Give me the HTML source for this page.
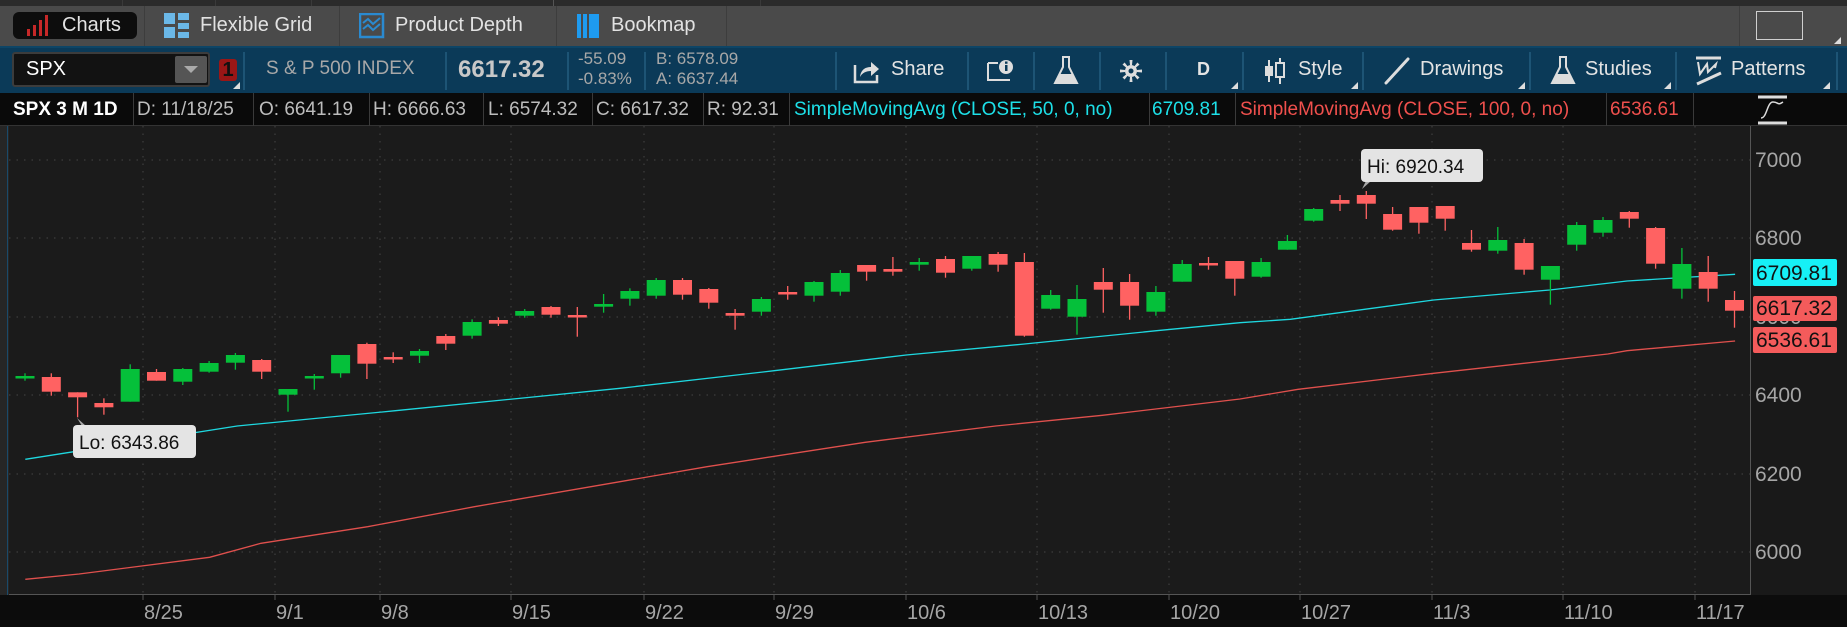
<!DOCTYPE html>
<html><head><meta charset="utf-8">
<style>
*{margin:0;padding:0;box-sizing:border-box}
body{width:1847px;height:627px;overflow:hidden;background:#1b1b1b;font-family:"Liberation Sans",sans-serif;position:relative}
.a{position:absolute;white-space:nowrap}
#tabs{position:absolute;left:0;top:0;width:1847px;height:46px;background:#4a4a4a}
#strip{position:absolute;left:0;top:0;width:1847px;height:6px;background:#2b2b2b}
.tab{color:#e2e2e2;font-size:20px;top:14px}
.vs{position:absolute;width:1px;background:#3a3a3a}
#tb{position:absolute;left:0;top:46px;width:1847px;height:47px;background:#0b3a58;border-top:2px solid #0e4566}
.tsep{position:absolute;top:4px;width:2px;height:38px;background:#1d5475}
.tt{color:#e4e4e4;font-size:20px;top:10px}
.corner{position:absolute;width:0;height:0;border-left:7px solid transparent;border-bottom:7px solid #ddd}
#info{position:absolute;left:0;top:93px;width:1847px;height:33px;background:#0a0a0a;border-bottom:1px solid #333}
.it{font-size:19px;color:#bdbdbd;top:6px}
.isep{position:absolute;top:0;width:1px;height:33px;background:#3a3a3a}
</style></head><body>
<div id="tabs">
 <div id="strip"></div>
 <div class="vs" style="left:122px;top:0;height:6px"></div><div class="vs" style="left:215px;top:0;height:6px"></div><div class="vs" style="left:311px;top:0;height:6px"></div><div class="vs" style="left:553px;top:0;height:6px;background:#555"></div><div class="vs" style="left:760px;top:0;height:6px"></div>
 <div class="a" style="left:13px;top:12px;width:124px;height:27px;background:#0d0d0d;border-radius:6px"></div>
 <svg class="a" style="left:26px;top:14px" width="26" height="24"><rect x="1" y="15" width="3" height="7" fill="#c62828"/><rect x="7" y="11" width="3" height="11" fill="#c62828"/><rect x="13" y="6" width="3" height="16" fill="#c62828"/><rect x="19" y="1" width="3" height="21" fill="#c62828"/></svg>
 <div class="a tab" style="left:62px">Charts</div>
 <div class="vs" style="left:144px;top:6px;height:40px;background:#3d3d3d"></div>
 <svg class="a" style="left:164px;top:13px" width="26" height="26"><rect x="0" y="0" width="11" height="11" fill="#6bb8e8"/><rect x="14" y="0" width="11" height="7" fill="#6bb8e8"/><rect x="14" y="10" width="11" height="6" fill="#6bb8e8"/><rect x="0" y="14" width="11" height="11" fill="#6bb8e8"/><rect x="14" y="19" width="11" height="6" fill="#6bb8e8"/></svg>
 <div class="a tab" style="left:200px">Flexible Grid</div>
 <div class="vs" style="left:339px;top:6px;height:40px;background:#3d3d3d"></div>
 <svg class="a" style="left:359px;top:13px" width="26" height="26"><rect x="1" y="1" width="23" height="23" fill="none" stroke="#2a8ad0" stroke-width="2.5"/><path d="M4 10 L9 6 L14 11 L21 5 M4 16 L9 12 L14 17 L21 11" stroke="#2a8ad0" stroke-width="2" fill="none"/></svg>
 <div class="a tab" style="left:395px">Product Depth</div>
 <div class="vs" style="left:556px;top:6px;height:40px;background:#3d3d3d"></div>
 <svg class="a" style="left:577px;top:13px" width="24" height="26"><rect x="0" y="1" width="4" height="24" fill="#1e9bf0"/><rect x="6" y="1" width="4" height="24" fill="#1e9bf0"/><rect x="12" y="1" width="10" height="24" fill="#1e9bf0"/></svg>
 <div class="a tab" style="left:611px">Bookmap</div>
 <div class="vs" style="left:726px;top:6px;height:40px;background:#3d3d3d"></div>
 <div class="vs" style="left:1739px;top:6px;height:40px;background:#3d3d3d"></div>
 <div class="a" style="left:1756px;top:11px;width:47px;height:29px;border:1px solid #cfcfcf"></div>
 <div class="corner" style="left:1834px;top:37px"></div>
</div>
<div id="tb">
 <div class="a" style="left:12px;top:4px;width:198px;height:35px;background:#121212;border:2px solid #3c3c3c;border-radius:3px"></div>
 <div class="a" style="left:26px;top:10px;color:#fff;font-size:20px">SPX</div>
 <div class="a" style="left:175px;top:8px;width:32px;height:27px;background:#555;border-radius:2px"></div>
 <div class="a" style="left:184px;top:18px;width:0;height:0;border-left:7px solid transparent;border-right:7px solid transparent;border-top:7px solid #aaa"></div>
 <div class="a" style="left:219px;top:11px;width:18px;height:22px;background:#9a1616;border-radius:3px;color:#111;font-size:20px;font-weight:bold;text-align:center;line-height:22px">1</div>
 <div class="corner" style="left:233px;top:34px"></div>
 <div class="tsep" style="left:243px"></div>
 <div class="a" style="left:266px;top:10px;color:#a8a8a8;font-size:19px">S &amp; P 500 INDEX</div>
 <div class="tsep" style="left:445px"></div>
 <div class="a" style="left:458px;top:8px;color:#c8c8c8;font-size:24px;font-weight:bold">6617.32</div>
 <div class="tsep" style="left:567px"></div>
 <div class="a" style="left:578px;top:1px;color:#a8a8a8;font-size:17px;line-height:20px">-55.09<br>-0.83%</div>
 <div class="tsep" style="left:644px"></div>
 <div class="a" style="left:656px;top:1px;color:#a8a8a8;font-size:17px;line-height:20px">B: 6578.09<br>A: 6637.44</div>
 <div class="tsep" style="left:835px"></div>
 <svg class="a" style="left:852px;top:9px" width="30" height="28"><path d="M3 8 V25 H25 V18" stroke="#ddd" stroke-width="2.5" fill="none"/><path d="M8 20 C9 12 14 10 19 10 V5 L27 12 L19 19 V14 C14 14 10 16 8 20Z" fill="#ddd"/></svg>
 <div class="a tt" style="left:891px">Share</div>
 <div class="tsep" style="left:967px"></div>
 <svg class="a" style="left:986px;top:10px" width="30" height="26"><path d="M2 5 V22 H24" stroke="#ddd" stroke-width="2" fill="none"/><path d="M2 5 H12" stroke="#ddd" stroke-width="2"/><circle cx="20" cy="9" r="7" fill="#ddd"/><rect x="19" y="7" width="2.5" height="6" fill="#0b3a58"/><rect x="19" y="3.5" width="2.5" height="2.3" fill="#0b3a58"/></svg>
 <div class="tsep" style="left:1033px"></div>
 <svg class="a" style="left:1053px;top:7px" width="26" height="32"><path d="M9 2 H17 M10 2 V12 L2 28 H24 L16 12 V2" stroke="#ddd" stroke-width="2" fill="none"/><path d="M6 19 H20 L24 28 H2Z" fill="#ddd"/></svg>
 <div class="tsep" style="left:1099px"></div>
 <svg class="a" style="left:1119px;top:11px" width="24" height="24"><g fill="#ddd"><circle cx="12" cy="12" r="6"/><path d="M10.5 1 H13.5 L13 6 H11Z M10.5 23 H13.5 L13 18 H11Z M1 10.5 V13.5 L6 13 V11Z M23 10.5 V13.5 L18 13 V11Z" /><path d="M3.5 5.6 L5.6 3.5 L8.6 7.2 L7.2 8.6Z M20.5 18.4 L18.4 20.5 L15.4 16.8 L16.8 15.4Z M18.4 3.5 L20.5 5.6 L16.8 8.6 L15.4 7.2Z M5.6 20.5 L3.5 18.4 L7.2 15.4 L8.6 16.8Z"/></g><circle cx="12" cy="12" r="2.5" fill="#0b3a58"/></svg>
 <div class="tsep" style="left:1165px"></div>
 <div class="a tt" style="left:1197px;font-weight:bold;font-size:18px;top:11px">D</div>
 <div class="corner" style="left:1231px;top:34px"></div>
 <div class="tsep" style="left:1242px"></div>
 <svg class="a" style="left:1264px;top:9px" width="22" height="28"><path d="M5 3 V25 M16 1 V27" stroke="#ddd" stroke-width="2"/><rect x="1" y="9" width="8" height="10" fill="#ddd"/><rect x="12" y="6" width="8" height="14" fill="#0b3a58" stroke="#ddd" stroke-width="2"/></svg>
 <div class="a tt" style="left:1298px">Style</div>
 <div class="corner" style="left:1351px;top:34px"></div>
 <div class="tsep" style="left:1362px"></div>
 <svg class="a" style="left:1383px;top:9px" width="28" height="28"><path d="M3 26 L25 2" stroke="#ddd" stroke-width="3" stroke-linecap="round"/></svg>
 <div class="a tt" style="left:1420px">Drawings</div>
 <div class="corner" style="left:1518px;top:34px"></div>
 <div class="tsep" style="left:1529px"></div>
 <svg class="a" style="left:1550px;top:7px" width="26" height="32"><path d="M9 2 H17 M10 2 V12 L2 28 H24 L16 12 V2" stroke="#ddd" stroke-width="2" fill="none"/><path d="M6 19 H20 L24 28 H2Z" fill="#ddd"/></svg>
 <div class="a tt" style="left:1585px">Studies</div>
 <div class="corner" style="left:1664px;top:34px"></div>
 <div class="tsep" style="left:1675px"></div>
 <svg class="a" style="left:1695px;top:8px" width="28" height="30"><path d="M1 2 H26" stroke="#ddd" stroke-width="3"/><path d="M3 6 L5 18 L12 8 L13 16 L21 8 L20 12" stroke="#ddd" stroke-width="2" fill="none"/><path d="M2 28 L26 17" stroke="#ddd" stroke-width="3"/></svg>
 <div class="a tt" style="left:1731px">Patterns</div>
 <div class="corner" style="left:1823px;top:34px"></div>
 <div class="tsep" style="left:1836px"></div>
</div>
<div id="info">
 <div class="a it" style="left:13px;color:#fff;font-weight:bold">SPX 3 M 1D</div>
 <div class="isep" style="left:133px"></div>
 <div class="a it" style="left:137px">D: 11/18/25</div>
 <div class="isep" style="left:253px"></div>
 <div class="a it" style="left:259px">O: 6641.19</div>
 <div class="isep" style="left:369px"></div>
 <div class="a it" style="left:373px">H: 6666.63</div>
 <div class="isep" style="left:483px"></div>
 <div class="a it" style="left:488px">L: 6574.32</div>
 <div class="isep" style="left:592px"></div>
 <div class="a it" style="left:596px">C: 6617.32</div>
 <div class="isep" style="left:703px"></div>
 <div class="a it" style="left:707px">R: 92.31</div>
 <div class="isep" style="left:789px"></div>
 <div class="a it" style="left:794px;color:#1de0e8">SimpleMovingAvg (CLOSE, 50, 0, no)</div>
 <div class="isep" style="left:1149px"></div>
 <div class="a it" style="left:1152px;color:#1de0e8">6709.81</div>
 <div class="isep" style="left:1235px"></div>
 <div class="a it" style="left:1240px;color:#f0504d">SimpleMovingAvg (CLOSE, 100, 0, no)</div>
 <div class="isep" style="left:1606px"></div>
 <div class="a it" style="left:1610px;color:#f0504d">6536.61</div>
 <div class="isep" style="left:1693px"></div>
 <svg class="a" style="left:1757px;top:1px" width="32" height="32"><path d="M1 3 H30 M1 29 H30" stroke="#ddd" stroke-width="3"/><path d="M4 24 C10 24 10 8 16 8 C22 8 20 12 26 8" stroke="#ddd" stroke-width="1.5" fill="none"/></svg>
</div>
<svg id="ch" class="a" style="left:0;top:126px" width="1847" height="501"></svg>
<script>
var s='';
var T=126;
function Y(zy){return 120+zy/3-T;}
s+='<rect x="0" y="0" width="1847" height="501" fill="#1b1b1b"/>';
s+='<rect x="0" y="0" width="9" height="501" fill="#262626"/><rect x="7" y="0" width="1" height="501" fill="#1a4a6a"/>';
s+='<rect x="0" y="469" width="1847" height="32" fill="#0c0c0c"/>';
s+='<rect x="1751" y="0" width="96" height="469" fill="#191919"/>';
s+='<rect x="1750" y="0" width="1" height="469" fill="#555"/>';
s+='<rect x="9" y="468" width="1742" height="1" fill="#555"/>';
var gy=[160,238,317,395,474,552],labs=['7000','6800','6600','6400','6200','6000'];
gy.forEach(function(y,i){var yy=y-T;s+='<line x1="9" x2="1750" y1="'+yy+'" y2="'+yy+'" stroke="#444" stroke-dasharray="1.5 6"/>';
 s+='<text x="1755" y="'+(yy+7)+'" fill="#a6a6a6" font-size="21">'+labs[i]+'</text>';});
var gx=[143,275,380,511,644,774,906,1037,1169,1300,1432,1563,1695],dl=['8/25','9/1','9/8','9/15','9/22','9/29','10/6','10/13','10/20','10/27','11/3','11/10','11/17'];
gx.forEach(function(x,i){s+='<line x1="'+x+'" x2="'+x+'" y1="0" y2="468" stroke="#444" stroke-dasharray="1.5 6"/>';
 s+='<line x1="'+x+'" x2="'+x+'" y1="468" y2="474" stroke="#555"/>';
 s+='<text x="'+(x+1)+'" y="493" fill="#a6a6a6" font-size="20">'+dl[i]+'</text>';});
function pl(arr,col){var p=arr.map(function(a){var x=a[0]==3?a[1]*620/1568:a[0]==4?620+a[1]*620/1568:1240+a[1]*607/1568;return x.toFixed(1)+','+Y(a[2]).toFixed(1);}).join(' ');
 s+='<polyline points="'+p+'" fill="none" stroke="'+col+'" stroke-width="1.3"/>';}
pl([[3,64,1018],[3,600,918],[3,1000,872],[3,1568,805],[4,390,752],[4,724,705],[4,1023,672],[4,1357,632],[4,1568,608],[5,130,598],[5,500,540],[5,800,510],[5,1000,483],[5,1279,463]],'#1ed8e0');
pl([[3,64,1378],[3,200,1362],[3,530,1312],[3,660,1270],[3,930,1220],[3,1200,1160],[3,1568,1085],[4,220,1040],[4,620,967],[4,950,918],[4,1220,886],[4,1568,837],[5,150,808],[5,500,760],[5,950,702],[5,1000,692],[5,1279,663]],'#e0504d');
var c=[[768,773,760,782,1],[771,815,760,827,0],[817,832,817,892,0],[849,862,835,884,0],[747,845,733,845,1],[756,782,747,782,0],[747,785,744,795,1],[729,755,723,758,1],[705,728,699,749,1],[720,755,717,777,0],[807,824,807,875,1],[768,773,762,809,1],[705,760,705,773,1],[672,731,668,777,0],[711,716,697,729,0],[693,707,687,729,1],[648,671,642,690,0],[606,647,598,656,1],[600,611,592,618,0],[573,587,567,593,1],[561,584,558,593,0],[585,590,561,650,0],[552,560,522,578,1],
[513,536,505,557,1],[480,527,474,536,1],[480,524,474,539,0],[507,548,504,566,0],[579,587,567,629,0],[537,575,531,587,1],[516,521,498,539,0],[486,527,483,545,1],[459,515,450,527,1],[435,455,435,482,0],[447,455,411,467,0],[426,434,414,452,1],[417,458,408,473,0],[408,446,408,452,1],[402,434,396,455,0],[426,647,399,650,0],[525,566,510,569,1],[537,590,495,644,1],[486,509,444,578,0],[486,557,462,599,0],[516,575,498,587,1],[432,485,420,485,1],[429,434,411,449,0],[423,476,423,527,0],
[426,470,414,473,1],[363,389,345,389,1],[267,302,264,305,1],[240,251,225,273,0],[225,251,213,297,0],[282,329,261,332,0],[261,308,261,341,0],[258,296,258,332,0],[369,389,330,395,0],[360,392,321,401,1],[369,449,357,464,0],[438,479,438,554,1],[315,374,306,392,1],[300,338,291,350,1],[276,296,273,323,0],[324,431,321,446,0],[432,506,384,536,1],[456,506,408,545,0],[540,572,513,623,0]];
c.forEach(function(d,i){var x=25+i*26.3,col=d[4]?'#05c03a':'#ff6262';
 var bt=Y(d[0]),bb=Y(d[1]);if(bb-bt<2.5)bb=bt+2.5;
 s+='<line x1="'+x.toFixed(1)+'" x2="'+x.toFixed(1)+'" y1="'+Y(d[2]).toFixed(1)+'" y2="'+Y(d[3]).toFixed(1)+'" stroke="'+col+'" stroke-width="1.3"/>';
 s+='<rect x="'+(x-9.5).toFixed(1)+'" y="'+bt.toFixed(1)+'" width="19" height="'+(bb-bt).toFixed(1)+'" fill="'+col+'"/>';});
s+='<path d="M77 '+(418-T)+' L82 '+(426-T)+' L86 '+(426-T)+'Z" fill="#aaa"/>';
s+='<rect x="73" y="'+(425-T)+'" width="123" height="33" rx="4" fill="#e4e4e4"/><text x="79" y="'+(449-T)+'" font-size="19" fill="#111">Lo: 6343.86</text>';
s+='<path d="M1366 '+(181-T)+' L1362 '+(189-T)+' L1371 '+(181-T)+'Z" fill="#aaa"/>';
s+='<rect x="1361" y="'+(149-T)+'" width="122" height="33" rx="4" fill="#e4e4e4"/><text x="1367" y="'+(173-T)+'" font-size="19" fill="#111">Hi: 6920.34</text>';
function pb(y1,y2,bg,t){s+='<rect x="1753" y="'+(y1-T)+'" width="84" height="'+(y2-y1)+'" rx="2" fill="'+bg+'"/><text x="1756" y="'+(y2-T-6)+'" font-size="21" fill="#111">'+t+'</text>';}
pb(259,286,'#16f0f6','6709.81');pb(296,321,'#f45b5b','6617.32');pb(327,353,'#f45b5b','6536.61');
document.getElementById('ch').innerHTML=s;
</script>
</body></html>
